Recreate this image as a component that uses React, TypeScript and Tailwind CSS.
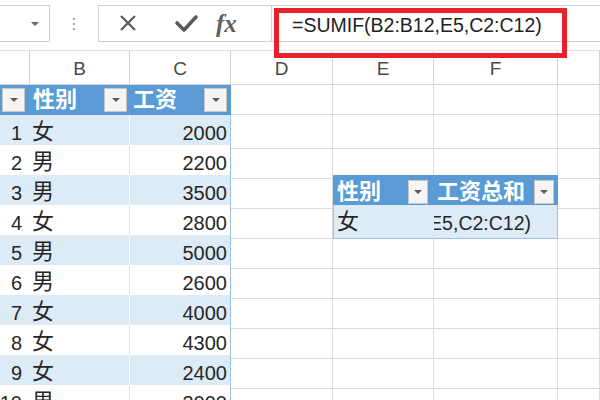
import React from "react";

const COLS = "grid grid-cols-[30px_100px_101px_102px_101px_124px_1fr]";
const SANS = "font-['Liberation_Sans',Arial,sans-serif]";
const CJK = "font-['Liberation_Sans','Noto_Sans_CJK_SC',sans-serif]";

const rows = [
  { n: 1, sex: "女", pay: 2000 },
  { n: 2, sex: "男", pay: 2200 },
  { n: 3, sex: "男", pay: 3500 },
  { n: 4, sex: "女", pay: 2800 },
  { n: 5, sex: "男", pay: 5000 },
  { n: 6, sex: "男", pay: 2600 },
  { n: 7, sex: "女", pay: 4000 },
  { n: 8, sex: "女", pay: 4300 },
  { n: 9, sex: "女", pay: 2400 },
  { n: 10, sex: "男", pay: 3000 },
];

const FilterBtn = ({ w = "w-[23px]" }: { w?: string }) => (
  <span className={`flex h-[24px] ${w} shrink-0 items-center justify-center border border-[#c9c9c9] bg-[#f5f5f5]`}>
    <span className="h-0 w-0 border-x-[4px] border-t-[4px] border-x-transparent border-t-[#5a5a5a]" />
  </span>
);

const Gap = () => <div className="border-b border-r border-[#dadada]" />;

const FormulaBar = () => (
  <div className="flex h-[50px] items-start pt-[5px]">
    <div className="flex h-[37px] w-[50px] items-center justify-end border-y border-r border-[#cfcfcf] pr-[10px]">
      <span className="h-0 w-0 border-x-[4px] border-t-[4px] border-x-transparent border-t-[#666]" />
    </div>
    <div className="flex h-[37px] w-[48px] flex-col items-center justify-center gap-[3px]">
      <span className="h-[2px] w-[2px] rounded-full bg-[#8a8a8a]" />
      <span className="h-[2px] w-[2px] rounded-full bg-[#8a8a8a]" />
      <span className="h-[2px] w-[2px] rounded-full bg-[#8a8a8a]" />
    </div>
    <div className="flex h-[37px] w-[174px] items-center border border-[#cfcfcf]">
      <svg width="56" height="37" viewBox="0 0 56 37" className="shrink-0">
        <path d="M22 11 L36 25 M36 11 L22 25" stroke="#5a5a5a" strokeWidth="2.2" fill="none" />
      </svg>
      <svg width="56" height="37" viewBox="0 0 56 37" className="shrink-0">
        <path d="M22 18 L29 25 L41 12" stroke="#5a5a5a" strokeWidth="3.6" fill="none" strokeLinecap="round" strokeLinejoin="round" />
      </svg>
      <span className="ml-[5px] font-['Liberation_Serif',serif] text-[25px] font-bold italic leading-none text-[#606060]">fx</span>
    </div>
    <div className={`flex h-[37px] flex-1 items-center border-y border-[#cfcfcf] pl-[20px] pt-[4px] ${SANS} text-[19.5px] text-[#222]`}>
      =SUMIF(B2:B12,E5,C2:C12)
    </div>
  </div>
);

const ColumnHeaders = () => (
  <div className={`${COLS} h-[35px] border-t border-[#e2e2e2] ${SANS} text-[19px] text-[#4a4a4a]`}>
    {["", "B", "C", "D", "E", "F", ""].map((l, i) => (
      <div key={i} className="flex items-center justify-center border-b border-r border-[#d4d4d4] pt-[4px]">
        {l}
      </div>
    ))}
  </div>
);

const TableHeader = () => (
  <div className={`${COLS} h-[30px] ${CJK} text-[22px] font-bold text-white`}>
    <div className="flex items-center justify-end bg-[#5b9bd5] pr-[5px]">
      <FilterBtn />
    </div>
    <div className="flex items-center justify-between bg-[#5b9bd5] pl-[3px] pr-[3px]">
      <span className="leading-none">性别</span>
      <FilterBtn />
    </div>
    <div className="flex items-center justify-between border-r border-[#5b9bd5] bg-[#5b9bd5] pl-[3px] pr-[3px]">
      <span className="leading-none">工资</span>
      <FilterBtn />
    </div>
    <Gap />
    <Gap />
    <Gap />
    <Gap />
  </div>
);

const DataRow = ({ n, sex, pay }: { n: number; sex: string; pay: number }) => {
  const band = n % 2 === 1;
  const bg = band ? "bg-[#ddebf7]" : "bg-white";
  const inner = band ? "border-white" : "border-[#e3e3e3]";
  return (
    <div className={`${COLS} h-[30px] ${SANS} text-[20px] text-[#262626]`}>
      <div className={`flex items-center justify-end border-b border-[#c6d6e8] ${bg} pr-[8px] pt-[3px]`}>{n}</div>
      <div className={`flex items-center border-b border-r border-b-[#c6d6e8] ${inner} ${bg} pl-[2px] ${CJK} text-[22px]`}>
        {sex}
      </div>
      <div className={`flex items-center justify-end border-b border-r border-b-[#c6d6e8] border-r-[#9bc2e6] ${bg} pr-[3px] pt-[3px]`}>
        {pay}
      </div>
      {n === 3 ? (
        <>
          <Gap />
          <div className={`flex items-center justify-between border-b border-l border-[#5b9bd5] bg-[#5b9bd5] pl-[3px] pr-[6px] ${CJK} text-[22px] font-bold text-white`}>
            <span className="leading-none">性别</span>
            <FilterBtn w="w-[20px]" />
          </div>
          <div className={`flex items-center justify-between border-b border-r border-[#5b9bd5] bg-[#5b9bd5] pl-[3px] pr-[3px] ${CJK} text-[22px] font-bold text-white`}>
            <span className="leading-none">工资总和</span>
            <FilterBtn w="w-[20px]" />
          </div>
          <Gap />
        </>
      ) : n === 4 ? (
        <>
          <Gap />
          <div className={`flex items-center border-b border-l border-r border-b-[#9bc2e6] border-l-[#9bc2e6] border-r-[#dfe9f4] bg-[#ddebf7] pl-[3px] ${CJK} text-[22px]`}>
            女
          </div>
          <div className="relative overflow-hidden border-b border-r border-[#9bc2e6] bg-[#ddebf7] text-[19.5px]">
            <span className="absolute right-[26px] top-[4px] whitespace-nowrap">=SUMIF(B2:B12,E5,C2:C12)</span>
          </div>
          <Gap />
        </>
      ) : (
        <>
          <Gap />
          <Gap />
          <Gap />
          <Gap />
        </>
      )}
    </div>
  );
};

export default function App() {
  return (
    <div className="relative h-[400px] w-[600px] overflow-hidden bg-white">
      <FormulaBar />
      <ColumnHeaders />
      <TableHeader />
      {rows.map((r) => (
        <DataRow key={r.n} {...r} />
      ))}
      <div className="absolute left-[274px] top-[8px] h-[50px] w-[293px] border-[5px] border-[#e8212b]" />
    </div>
  );
}
